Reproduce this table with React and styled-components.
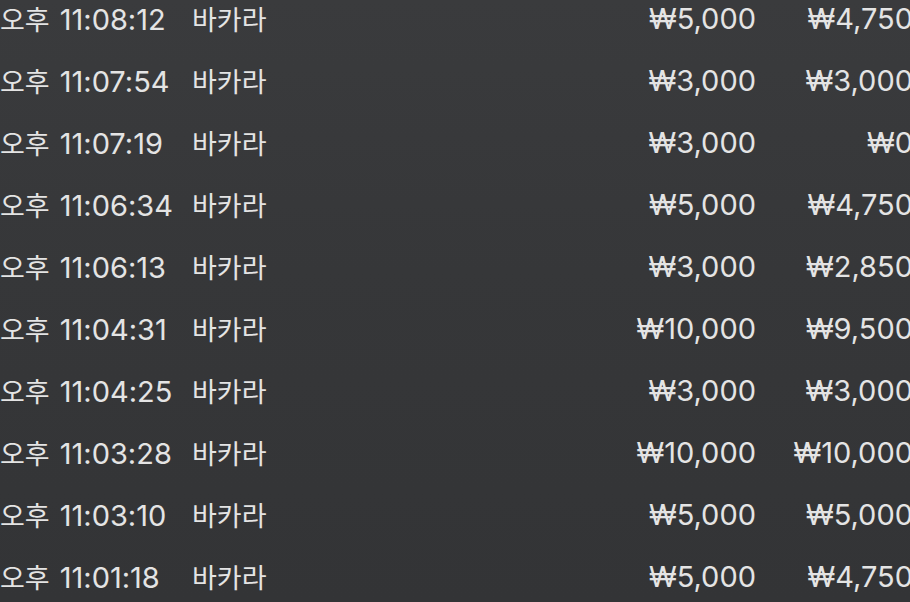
import React from 'react';
import styled, { createGlobalStyle } from 'styled-components';

const Global = createGlobalStyle`
  html, body {
    margin: 0;
    padding: 0;
    width: 910px;
    height: 602px;
    overflow: hidden;
    background: #363739;
  }
`

const Screen = styled.div`
  width: 910px;
  height: 602px;
  overflow: hidden;
  background: linear-gradient(180deg, #3a3b3d 0%, #363739 45%, #333436 100%);
  font-family: Inter, "Noto Sans CJK KR", sans-serif;
`

const List = styled.div`
  margin-top: -13px;
  width: 913px;
`

const Row = styled.div`
  display: grid;
  grid-template-columns: 192px 1fr 180px 157px;
  align-items: center;
  height: 62px;
  font-size: 29px;
  color: #e4e4e4;
  white-space: nowrap;
`

const Cell = styled.div`
  text-align: ${p => (p.right ? 'right' : 'left')};
`

const Hangul = styled.span`
  font-size: 27px;
  margin-right: ${p => (p.gap ? '10px' : '0')};
`

const rows = [
  ['11:08:12', '₩5,000', '₩4,750'],
  ['11:07:54', '₩3,000', '₩3,000'],
  ['11:07:19', '₩3,000', '₩0'],
  ['11:06:34', '₩5,000', '₩4,750'],
  ['11:06:13', '₩3,000', '₩2,850'],
  ['11:04:31', '₩10,000', '₩9,500'],
  ['11:04:25', '₩3,000', '₩3,000'],
  ['11:03:28', '₩10,000', '₩10,000'],
  ['11:03:10', '₩5,000', '₩5,000'],
  ['11:01:18', '₩5,000', '₩4,750'],
];

const App = () => {
  return (
    <Screen>
      <Global />
      <List>
        {rows.map((r, i) => (
          <Row key={i}>
            <Cell><Hangul gap>오후</Hangul>{r[0]}</Cell>
            <Cell><Hangul>바카라</Hangul></Cell>
            <Cell right>{r[1]}</Cell>
            <Cell right>{r[2]}</Cell>
          </Row>
        ))}
      </List>
    </Screen>
  );
};

export default App;
